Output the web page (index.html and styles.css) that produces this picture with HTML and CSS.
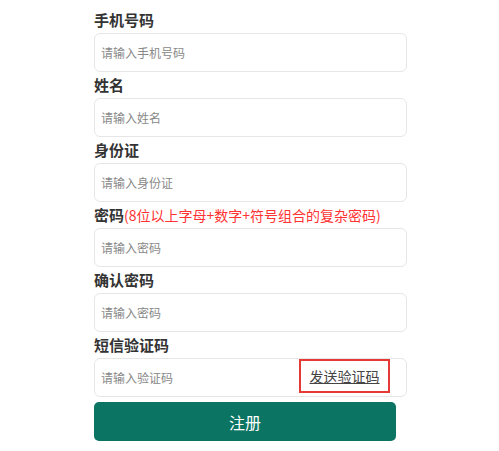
FILE: index.html
```html
<!DOCTYPE html>
<html lang="zh-CN">
<head>
    <meta charset="UTF-8">
    <meta name="viewport" content="width=device-width, initial-scale=1.0">
    <title>注册</title>
    <link rel="stylesheet" href="styles.css">
</head>
<body>
    <form class="register">
        <label class="field-label" for="phone">手机号码</label>
        <input class="field-input" id="phone" type="text" placeholder="请输入手机号码">

        <label class="field-label" for="name">姓名</label>
        <input class="field-input" id="name" type="text" placeholder="请输入姓名">

        <label class="field-label" for="idcard">身份证</label>
        <input class="field-input" id="idcard" type="text" placeholder="请输入身份证">

        <label class="field-label" for="password">密码<span class="hint">(8位以上字母+数字+符号组合的复杂密码)</span></label>
        <input class="field-input" id="password" type="password" placeholder="请输入密码">

        <label class="field-label" for="confirm">确认密码</label>
        <input class="field-input" id="confirm" type="password" placeholder="请输入密码">

        <label class="field-label" for="code">短信验证码</label>
        <div class="code-row">
            <input class="code-input" id="code" type="text" placeholder="请输入验证码">
            <a class="send-code" href="#">发送验证码</a>
        </div>

        <button class="submit" type="button">注册</button>
    </form>
</body>
</html>
```

FILE: styles.css
```css
* {
    box-sizing: border-box;
}

body {
    margin: 0;
    background: #fff;
    font-family: "Noto Sans CJK SC", "Noto Sans", sans-serif;
}

.register {
    width: 313px;
    margin: 0 92px 0 94px;
    padding-top: 10px;
    display: flex;
    flex-direction: column;
}

.field-label {
    display: block;
    font-size: 15px;
    line-height: 20px;
    font-weight: bold;
    color: #333;
    margin-bottom: 3px;
}

.hint {
    color: #f33;
    font-size: 14px;
    font-weight: normal;
}

.field-input,
.code-row {
    width: 100%;
    height: 39px;
    margin-bottom: 3px;
    border: 1px solid #e6e6e6;
    border-radius: 6px;
    background: #fff;
}

.field-input {
    padding: 0 6px;
    font-size: 12px;
    font-family: inherit;
    outline: none;
}

.field-input::placeholder,
.code-input::placeholder {
    color: #888;
}

.code-row {
    display: flex;
    align-items: center;
    padding: 0 16px 0 0;
}

.code-input {
    flex: 1;
    min-width: 0;
    height: 100%;
    border: none;
    background: transparent;
    padding: 0 6px;
    font-size: 12px;
    font-family: inherit;
    outline: none;
}

.send-code {
    display: block;
    width: 91px;
    height: 34px;
    margin-top: -3px;
    line-height: 30px;
    text-align: center;
    border: 2px solid #e53935;
    font-size: 14px;
    color: #444;
    text-decoration: underline;
}

.submit {
    width: 302px;
    height: 39px;
    margin-top: 2px;
    border: none;
    border-radius: 5px;
    background-color: #0b7462;
    color: #fff;
    font-size: 16px;
    font-family: inherit;
    cursor: pointer;
}
```
